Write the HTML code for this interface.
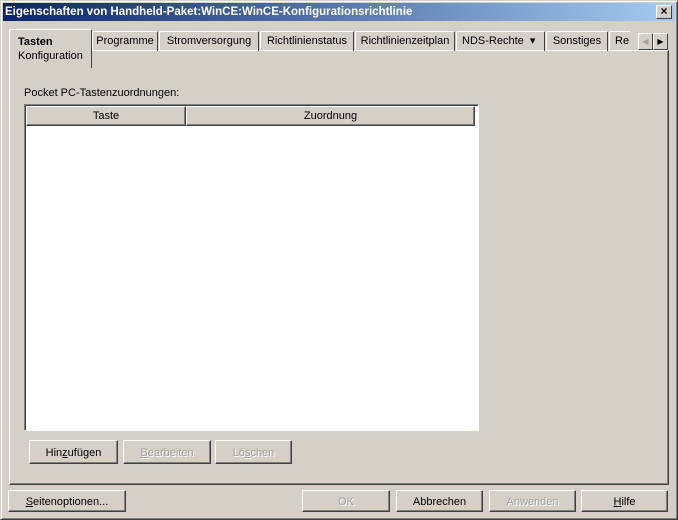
<!DOCTYPE html>
<html><head><meta charset="utf-8"><style>
*{box-sizing:border-box;margin:0;padding:0}
body{width:678px;height:520px;background:#d4d0c8;font-family:"Liberation Sans",sans-serif;font-size:11px;color:#000;position:relative;overflow:hidden}
.a{position:absolute}
.win{left:0;top:0;width:678px;height:520px;border:1px solid;border-color:#d4d0c8 #404040 #404040 #d4d0c8;box-shadow:inset 1px 1px #fff,inset -1px -1px #808080}
.title{left:3px;top:3px;width:672px;height:18px;background:linear-gradient(to right,#0a246a,#a6caf0);color:#fff;font-weight:bold;font-size:11.5px;line-height:18px;padding-left:2px}
.x{left:656px;top:5px;width:16px;height:14px;background:#d4d0c8;border:1px solid;border-color:#fff #404040 #404040 #fff;font-size:12px;line-height:11px;text-align:center;color:#000;font-weight:bold}
.tab{top:31px;height:20px;border:1px solid;border-bottom:none;border-color:#fff #404040 #fff #fff;border-radius:2px 2px 0 0;line-height:19px;text-align:center;font-size:11px}
.panel{left:9px;top:50px;width:660px;height:435px;border:1px solid;border-color:#fff #404040 #404040 #fff;box-shadow:inset -1px -1px #808080}
.btn{height:24px;border:1px solid;border-color:#fff #404040 #404040 #fff;box-shadow:inset -1px -1px #808080;text-align:center;line-height:24px;font-size:11px}
.dis{color:#a0a0a0;text-shadow:1px 1px #fff}
.hd{top:106px;height:20px;border:1px solid;border-color:#fff #404040 #404040 #fff;box-shadow:inset -1px -1px #808080;background:#d4d0c8;text-align:center;line-height:19px}
</style></head><body>
<div class="a win"></div>
<div class="a title">Eigenschaften von Handheld-Paket:WinCE:WinCE-Konfigurationsrichtlinie</div>
<div class="a x">×</div>
<div class="a panel"></div>
<div class="a tab" style="left:92px;width:66px">Programme</div>
<div class="a tab" style="left:159px;width:100px">Stromversorgung</div>
<div class="a tab" style="left:260px;width:94px">Richtlinienstatus</div>
<div class="a tab" style="left:355px;width:100px">Richtlinienzeitplan</div>
<div class="a tab" style="left:456px;width:89px;text-align:left;padding-left:5px">NDS-Rechte &nbsp;▾</div>
<div class="a tab" style="left:546px;width:62px">Sonstiges</div>
<div class="a tab" style="left:609px;width:22px;border-right:none;text-align:left;padding-left:5px;overflow:hidden">Re</div>
<div class="a" style="left:638px;top:33px;width:15px;height:17px;border:1px solid;border-color:#fff #404040 #404040 #fff;color:#a0a0a0;font-size:8px;line-height:15px;text-align:center">◀</div>
<div class="a" style="left:653px;top:33px;width:15px;height:17px;border:1px solid;border-color:#fff #404040 #404040 #fff;font-size:8px;line-height:15px;text-align:center">▶</div>
<div class="a" style="left:9px;top:29px;width:83px;height:39px;background:#d4d0c8;border:1px solid;border-bottom:none;border-color:#fff #404040 #fff #fff;border-radius:2px 2px 0 0;padding:5px 0 0 8px;line-height:14px"><b>Tasten</b><br>Konfiguration</div>
<div class="a" style="left:24px;top:87px">Pocket PC-Tastenzuordnungen:</div>
<div class="a" style="left:24px;top:104px;width:455px;height:327px;background:#fff;border:1px solid;border-color:#808080 #fff #fff #808080;box-shadow:inset 1px 1px #404040"></div>
<div class="a hd" style="left:26px;width:160px">Taste</div>
<div class="a hd" style="left:186px;width:289px">Zuordnung</div>
<div class="a btn" style="left:29px;top:440px;width:89px">Hin<u>z</u>ufügen</div>
<div class="a btn dis" style="left:123px;top:440px;width:88px"><u>B</u>earbeiten</div>
<div class="a btn dis" style="left:215px;top:440px;width:77px">Lö<u>s</u>chen</div>
<div class="a btn" style="left:8px;top:490px;width:118px;height:22px;line-height:22px"><u>S</u>eitenoptionen...</div>
<div class="a btn dis" style="left:302px;top:490px;width:88px;height:22px;line-height:22px">OK</div>
<div class="a btn" style="left:396px;top:490px;width:87px;height:22px;line-height:22px">Abbrechen</div>
<div class="a btn dis" style="left:489px;top:490px;width:87px;height:22px;line-height:22px">Anwenden</div>
<div class="a btn" style="left:581px;top:490px;width:87px;height:22px;line-height:22px"><u>H</u>ilfe</div>
</body></html>
